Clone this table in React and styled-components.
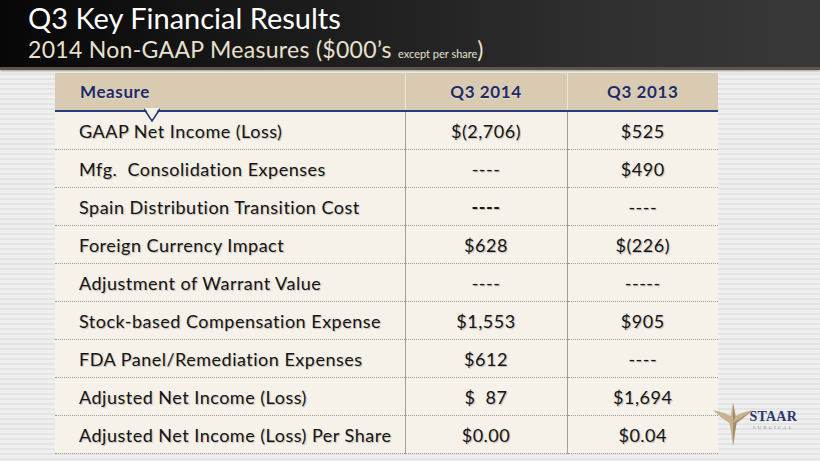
import styled, { createGlobalStyle } from "styled-components";

const rows = [
  { label: "GAAP Net Income (Loss)", q14: "$(2,706)", q13: "$525" },
  { label: "Mfg.  Consolidation Expenses", q14: "----", q13: "$490" },
  { label: "Spain Distribution Transition Cost", q14: "----", q13: "----", bold14: true },
  { label: "Foreign Currency Impact", q14: "$628", q13: "$(226)" },
  { label: "Adjustment of Warrant Value", q14: "----", q13: "-----" },
  { label: "Stock-based Compensation Expense", q14: "$1,553", q13: "$905" },
  { label: "FDA Panel/Remediation Expenses", q14: "$612", q13: "----" },
  { label: "Adjusted Net Income (Loss)", q14: "$  87", q13: "$1,694" },
  { label: "Adjusted Net Income (Loss) Per Share", q14: "$0.00", q13: "$0.04" },
];

const GlobalStyle = createGlobalStyle`
  html, body {
    margin: 0;
    padding: 0;
  }
  body {
    font-family: Lato, "Open Sans", sans-serif;
  }
`;

const Slide = styled.div`
  width: 820px;
  height: 461px;
  overflow: hidden;
  background: repeating-linear-gradient(
    180deg,
    #efefef 0px,
    #efefef 3px,
    #e4e4e4 3px,
    #e4e4e4 5px
  );
  display: flex;
  flex-direction: column;
  position: relative;
`;

const Header = styled.header`
  height: 70px;
  box-sizing: border-box;
  padding: 1px 0 0 28px;
  background: linear-gradient(90deg, #070707 0%, #1d1d1d 40%, #303030 75%, #383838 100%);
  border-bottom: 3px solid #5e554a;
  box-shadow: 0 1px 2px rgba(0, 0, 0, 0.35);
`;

const Title = styled.h1`
  margin: 0;
  font-family: Lato, sans-serif;
  font-weight: 400;
  font-size: 29px;
  line-height: 34px;
  color: #ffffff;
`;

const Subtitle = styled.h2`
  margin: 0;
  font-family: Lato, sans-serif;
  font-weight: 400;
  font-size: 23px;
  line-height: 28px;
  color: #e9e1cf;
  letter-spacing: 0.3px;
`;

const Small = styled.span`
  font-size: 11px;
  letter-spacing: 0;
`;

const Body = styled.div`
  padding: 3px 0 0 55px;
`;

const TableWrap = styled.div`
  position: relative;
  width: 663px;
`;

const Table = styled.table`
  border-collapse: collapse;
  width: 663px;
  table-layout: fixed;
  font-family: Lato, sans-serif;
`;

const HeadCell = styled.th`
  height: 37px;
  padding: 0;
  background: #d8cbb1;
  color: #1f2a66;
  font-size: 17px;
  font-weight: 700;
  letter-spacing: 0.6px;
  text-align: ${(p) => (p.$left ? "left" : "center")};
  padding-left: ${(p) => (p.$left ? "25px" : "0")};
  border-bottom: 2px solid #253c7c;
  border-left: ${(p) => (p.$left ? "none" : "1px solid #ece4d4")};
  text-shadow: 0 1px 1px rgba(255, 255, 255, 0.4);
`;

const Row = styled.tr`
  background: #f6f1e9;
  border-bottom: 1px dotted #9b9b9b;
`;

const Cell = styled.td`
  height: 37px;
  padding: 0;
  font-size: 18px;
  letter-spacing: 0.5px;
  color: #151515;
  font-weight: ${(p) => (p.$bold ? 700 : 400)};
  text-align: ${(p) => (p.$left ? "left" : "center")};
  padding-left: ${(p) => (p.$left ? "24px" : "0")};
  border-left: ${(p) => (p.$left ? "none" : "1px solid #a59e92")};
  text-shadow: 1px 1px 1px rgba(0, 0, 0, 0.22);
  white-space: pre;
`;

const Notch = styled.svg`
  position: absolute;
  left: 89px;
  top: 35px;
`;

const Logo = styled.div`
  position: absolute;
  right: 23px;
  bottom: 14px;
  display: flex;
  align-items: center;
`;

const LogoText = styled.div`
  display: flex;
  flex-direction: column;
  align-items: center;
  margin-left: -4px;
  margin-top: -6px;
`;

const Brand = styled.span`
  font-family: "Liberation Serif", serif;
  font-weight: 700;
  font-size: 14px;
  color: #2b3770;
  letter-spacing: 0.2px;
  line-height: 14px;
`;

const Sub = styled.span`
  font-family: "Liberation Serif", serif;
  font-size: 5px;
  color: #8a8a8a;
  letter-spacing: 2px;
  line-height: 8px;
`;

const StarMark = () => (
  <svg width="42" height="46" viewBox="0 0 42 46">
    <path
      d="M21 2 L23.5 15 Q31 11 41 9 Q31 18 24.5 22 Q22.5 33 21 45 Q19.5 33 17.5 22 Q10 18 1 9 Q11 11 18.5 15 Z"
      fill="#c6b28c"
    />
    <path d="M21 2 L23.5 15 L21 22 Z M41 9 L24.5 22 L21 22 Z M21 45 L21 22 L24.5 22 Z" fill="#a38d66" />
  </svg>
);

export default function App() {
  return (
    <>
      <GlobalStyle />
      <Slide>
        <Header>
          <Title>Q3 Key Financial Results</Title>
          <Subtitle>
            2014 Non-GAAP Measures ($000’s <Small>except per share</Small>)
          </Subtitle>
        </Header>
        <Body>
          <TableWrap>
            <Table>
              <colgroup>
                <col style={{ width: 350 }} />
                <col style={{ width: 162 }} />
                <col style={{ width: 151 }} />
              </colgroup>
              <thead>
                <tr>
                  <HeadCell $left>Measure</HeadCell>
                  <HeadCell>Q3 2014</HeadCell>
                  <HeadCell>Q3 2013</HeadCell>
                </tr>
              </thead>
              <tbody>
                {rows.map((r) => (
                  <Row key={r.label}>
                    <Cell $left>{r.label}</Cell>
                    <Cell $bold={r.bold14}>{r.q14}</Cell>
                    <Cell>{r.q13}</Cell>
                  </Row>
                ))}
              </tbody>
            </Table>
            <Notch width="16" height="14" viewBox="0 0 16 14">
              <polygon points="1,0 8,12 15,0" fill="#f6f1e9" />
              <polyline points="0,1 8,13 16,1" fill="none" stroke="#253c7c" strokeWidth="1.6" />
            </Notch>
          </TableWrap>
        </Body>
        <Logo>
          <StarMark />
          <LogoText>
            <Brand>STAAR</Brand>
            <Sub>SURGICAL</Sub>
          </LogoText>
        </Logo>
      </Slide>
    </>
  );
}
